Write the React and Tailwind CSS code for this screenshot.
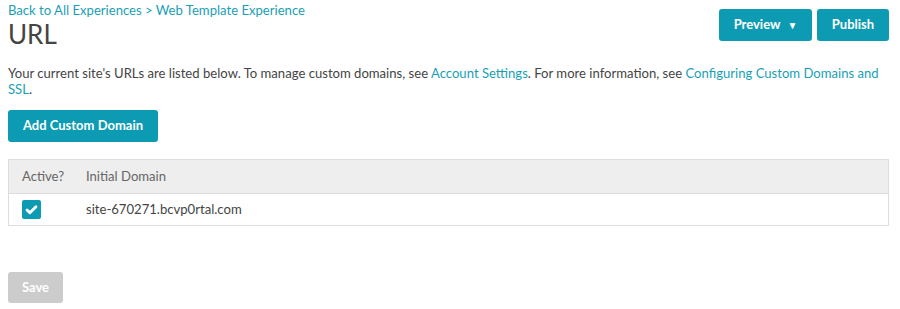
import React from 'react';

const App = () => {
  const font = { fontFamily: 'Lato, "Open Sans", sans-serif' };

  return (
    <div className="w-[900px] h-[309px] bg-white text-[#444] px-2" style={font}>
      {/* Header */}
      <div className="flex justify-between items-start">
        <div className="pt-[1px]">
          <a className="text-[13.1px] leading-[18px] text-[#1a9fb5] block">
            Back to All Experiences &gt; Web Template Experience
          </a>
          <h1 className="text-[26px] leading-[30px] text-[#444] font-normal">URL</h1>
        </div>
        <div className="flex gap-[5px] pt-[9px] pr-[3px]">
          <button className="h-[32px] w-[93px] rounded-[3px] bg-[#0d9bb3] text-white text-[13px] font-bold flex items-center justify-center gap-[7px]">
            Preview <span className="text-[10px]">▼</span>
          </button>
          <button className="h-[32px] w-[72px] rounded-[3px] bg-[#0d9bb3] text-white text-[13px] font-bold">
            Publish
          </button>
        </div>
      </div>

      {/* Description */}
      <p className="mt-[16px] text-[13.1px] leading-[16px] text-[#444] pr-[10px]">
        Your current site's URLs are listed below. To manage custom domains, see{' '}
        <a className="text-[#1a9fb5]">Account Settings</a>. For more information, see{' '}
        <a className="text-[#1a9fb5]">Configuring Custom Domains and SSL</a>.
      </p>

      {/* Add Custom Domain */}
      <button className="mt-[13px] h-[32px] w-[150px] rounded-[3px] bg-[#0d9bb3] text-white text-[13px] font-bold">
        Add Custom Domain
      </button>

      {/* Table */}
      <div className="mt-[17px] w-[881px] border border-[#ddd] text-[13.1px]">
        <div className="h-[34px] bg-[#eee] border-b border-[#ddd] flex items-center text-[#666]">
          <div className="w-[77px] pl-[13px]">Active?</div>
          <div>Initial Domain</div>
        </div>
        <div className="h-[31px] flex items-center text-[#444]">
          <div className="w-[77px] pl-[13px] flex items-center">
            <span className="w-[19px] h-[19px] rounded-[2px] bg-[#0d9bb3] flex items-center justify-center">
              <svg viewBox="0 0 16 16" className="w-[13px] h-[13px]" fill="none" stroke="white" strokeWidth="3.5" strokeLinecap="round" strokeLinejoin="round">
                <path d="M2.5 8.5l3.5 3.5 7.5-7.5" />
              </svg>
            </span>
          </div>
          <div>site-670271.bcvp0rtal.com</div>
        </div>
      </div>

      {/* Save */}
      <button className="mt-[46px] h-[31px] w-[55px] rounded-[3px] bg-[#ccc] text-white text-[13px] font-bold">
        Save
      </button>
    </div>
  );
};

export default App;
